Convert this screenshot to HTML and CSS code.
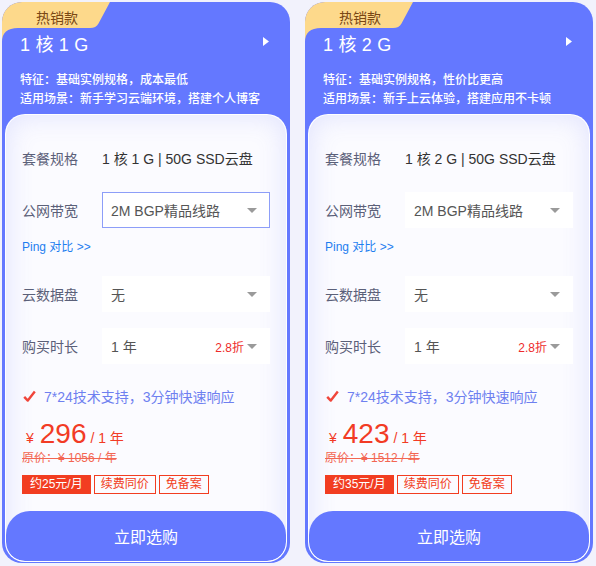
FILE: index.html
```html
<!DOCTYPE html>
<html lang="zh-CN">
<head>
<meta charset="utf-8">
<title>云服务器套餐</title>
<link rel="stylesheet" href="styles.css">
</head>
<body>
<div class="cards">
  <div class="card">
    <div class="badge">
      <svg class="badge-bg" width="110" height="40" viewBox="0 0 110 40"><path d="M0 0H108L96.5 21.5Q94 26 88 26H16Q0 26 0 40Z" fill="#fdd98b"/></svg>
      <span class="badge-text">热销款</span>
    </div>
    <div class="head">
      <div class="title-row">
        <span class="title">1 核 1 G</span>
        <svg class="arrow" width="6" height="9" viewBox="0 0 6 9"><path d="M0 0L6 4.5L0 9Z" fill="#fff"/></svg>
      </div>
      <div class="desc">
        <p>特征：基础实例规格，成本最低</p>
        <p>适用场景：新手学习云端环境，搭建个人博客</p>
      </div>
    </div>
    <div class="panel">
      <div class="row"><span class="label">套餐规格</span><span class="spec">1 核 1 G | 50G SSD云盘</span></div>
      <div class="row gap"><span class="label">公网带宽</span><div class="select active"><span class="sel-text">2M BGP精品线路</span><i class="caret"></i></div></div>
      <a class="ping">Ping 对比 &gt;&gt;</a>
      <div class="row gap-l"><span class="label">云数据盘</span><div class="select"><span class="sel-text">无</span><i class="caret"></i></div></div>
      <div class="row gap"><span class="label">购买时长</span><div class="select"><span class="sel-text">1 年</span><span class="discount">2.8折</span><i class="caret"></i></div></div>
      <div class="feature">
        <svg class="check" width="13" height="13" viewBox="0 0 13 13"><path d="M1.2 6.8L4.8 10.6L11.8 1.6" fill="none" stroke="#f0453a" stroke-width="2.4" stroke-linejoin="round"/></svg>
        <span>7*24技术支持，3分钟快速响应</span>
      </div>
      <div class="price"><span class="cur">¥</span><span class="num">296</span><span class="unit"> / 1 年</span></div>
      <div class="orig">原价：¥ 1056 / 年</div>
      <div class="tags"><span class="tag fill">约25元/月</span><span class="tag">续费同价</span><span class="tag">免备案</span></div>
      <button class="buy">立即选购</button>
    </div>
  </div>

  <div class="card">
    <div class="badge">
      <svg class="badge-bg" width="110" height="40" viewBox="0 0 110 40"><path d="M0 0H108L96.5 21.5Q94 26 88 26H16Q0 26 0 40Z" fill="#fdd98b"/></svg>
      <span class="badge-text">热销款</span>
    </div>
    <div class="head">
      <div class="title-row">
        <span class="title">1 核 2 G</span>
        <svg class="arrow" width="6" height="9" viewBox="0 0 6 9"><path d="M0 0L6 4.5L0 9Z" fill="#fff"/></svg>
      </div>
      <div class="desc">
        <p>特征：基础实例规格，性价比更高</p>
        <p>适用场景：新手上云体验，搭建应用不卡顿</p>
      </div>
    </div>
    <div class="panel">
      <div class="row"><span class="label">套餐规格</span><span class="spec">1 核 2 G | 50G SSD云盘</span></div>
      <div class="row gap"><span class="label">公网带宽</span><div class="select"><span class="sel-text">2M BGP精品线路</span><i class="caret"></i></div></div>
      <a class="ping">Ping 对比 &gt;&gt;</a>
      <div class="row gap-l"><span class="label">云数据盘</span><div class="select"><span class="sel-text">无</span><i class="caret"></i></div></div>
      <div class="row gap"><span class="label">购买时长</span><div class="select"><span class="sel-text">1 年</span><span class="discount">2.8折</span><i class="caret"></i></div></div>
      <div class="feature">
        <svg class="check" width="13" height="13" viewBox="0 0 13 13"><path d="M1.2 6.8L4.8 10.6L11.8 1.6" fill="none" stroke="#f0453a" stroke-width="2.4" stroke-linejoin="round"/></svg>
        <span>7*24技术支持，3分钟快速响应</span>
      </div>
      <div class="price"><span class="cur">¥</span><span class="num">423</span><span class="unit"> / 1 年</span></div>
      <div class="orig">原价：¥ 1512 / 年</div>
      <div class="tags"><span class="tag fill">约35元/月</span><span class="tag">续费同价</span><span class="tag">免备案</span></div>
      <button class="buy">立即选购</button>
    </div>
  </div>
</div>
</body>
</html>
```

FILE: styles.css
```css
* { box-sizing: border-box; }
html, body { margin: 0; padding: 0; }
body {
  background: #f2f2fc;
  font-family: "Liberation Sans", "Noto Sans CJK SC", sans-serif;
  width: 596px;
  height: 566px;
  overflow: hidden;
}
p { margin: 0; }

.cards {
  display: flex;
  gap: 15px;
  padding: 2px 0 0 2px;
}

.card {
  position: relative;
  width: 288px;
  height: 561px;
  background: #6478ff;
  border-radius: 20px;
  overflow: hidden;
  display: flex;
  flex-direction: column;
}

.badge {
  position: absolute;
  left: 0;
  top: 0;
  width: 110px;
  height: 40px;
}
.badge-bg { display: block; }
.badge-text {
  position: absolute;
  left: 34px;
  top: 0;
  line-height: 32px;
  font-size: 14px;
  color: #7a4714;
}

.head {
  padding: 30px 21px 0 18px;
  color: #fff;
}
.title-row {
  display: flex;
  justify-content: space-between;
  align-items: flex-start;
  height: 26px;
}
.title {
  font-size: 18px;
  line-height: 26px;
  letter-spacing: 0.2px;
}
.arrow { margin-top: 5px; }

.desc {
  margin-top: 13px;
  font-size: 12px;
  line-height: 19px;
  font-weight: 500;
}

.panel {
  flex: 1;
  margin: 5px 3px 1px;
  border: 1px solid rgba(255, 255, 255, 0.95);
  border-radius: 20px;
  overflow: hidden;
  background: #fbfbff;
  box-shadow: inset 0 0 26px 2px rgba(98, 112, 240, 0.16);
  padding: 25px 16px 0;
  display: flex;
  flex-direction: column;
}

.row {
  display: flex;
  align-items: center;
  height: 36px;
  flex-shrink: 0;
}
.row.gap { margin-top: 16px; }
.row.gap-l { margin-top: 20px; }

.label {
  width: 80px;
  flex-shrink: 0;
  font-size: 14px;
  color: #5b6079;
}
.spec {
  font-size: 14px;
  color: #333;
}

.select {
  flex: 1;
  height: 36px;
  background: #fff;
  border: 1px solid #fff;
  display: flex;
  align-items: center;
  padding: 0 12px 0 8px;
}
.select.active { border-color: #8d9ef8; }
.sel-text {
  flex: 1;
  font-size: 14px;
  color: #555;
}
.discount {
  font-size: 12px;
  color: #ee2b2b;
  margin-right: 3px;
}
.caret {
  width: 0;
  height: 0;
  border-left: 5px solid transparent;
  border-right: 5px solid transparent;
  border-top: 5px solid #9a9a9a;
}

.ping {
  margin-top: 10px;
  font-size: 12px;
  line-height: 18px;
  color: #1e7ef0;
}

.feature {
  margin-top: 22px;
  height: 20px;
  display: flex;
  align-items: center;
  gap: 8px;
  font-size: 14px;
  color: #6e80f0;
}
.check { margin-left: 1px; }

.price {
  margin-top: 12px;
  height: 32px;
  font-size: 28px;
  line-height: 32px;
  color: #f23b25;
  padding-left: 4px;
}
.cur {
  font-size: 14px;
  line-height: 1;
  margin-right: 6px;
}
.unit {
  font-size: 14px;
  line-height: 1;
}

.orig {
  font-size: 12px;
  line-height: 16px;
  color: #f36652;
  text-decoration: line-through;
}

.tags {
  margin-top: 9px;
  display: flex;
  gap: 3px;
}
.tag {
  font-size: 12px;
  line-height: 17px;
  padding: 0 6px;
  border: 1px solid #f23d21;
  color: #f23d21;
}
.tag.fill {
  background: #f23d21;
  color: #fff;
  padding: 0 7px;
}

.buy {
  margin: auto -16px 0;
  height: 50px;
  border: 0;
  border-radius: 24px 24px 19px 19px;
  background: #6478ff;
  color: #fff;
  font-family: inherit;
  font-size: 16px;
  flex-shrink: 0;
}
```
